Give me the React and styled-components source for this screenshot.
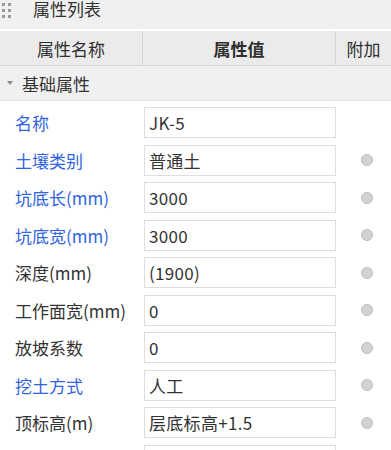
import React from 'react';
import styled, { createGlobalStyle } from 'styled-components';

const GlobalStyle = createGlobalStyle`
    html, body {
        margin: 0;
        padding: 0;
        background: #ffffff;
    }
    body {
        font-family: "Noto Sans CJK SC", "Noto Sans", sans-serif;
        color: #333333;
        overflow: hidden;
    }
`;

const rows = [
    { name: '名称', value: 'JK-5', link: true, extra: false },
    { name: '土壤类别', value: '普通土', link: true, extra: true },
    { name: '坑底长(mm)', value: '3000', link: true, extra: true },
    { name: '坑底宽(mm)', value: '3000', link: true, extra: true },
    { name: '深度(mm)', value: '(1900)', link: false, extra: true },
    { name: '工作面宽(mm)', value: '0', link: false, extra: true },
    { name: '放坡系数', value: '0', link: false, extra: true },
    { name: '挖土方式', value: '人工', link: true, extra: true },
    { name: '顶标高(m)', value: '层底标高+1.5', link: false, extra: true },
    { name: '', value: '', link: false, extra: false },
];

export default function App() {
    return (
        <Panel>
            <GlobalStyle />
            <TitleBar>
                <Grip>
                    {[0, 1, 2, 3, 4, 5].map((i) => <Dot key={i} />)}
                </Grip>
                <Title>属性列表</Title>
            </TitleBar>
            <HeaderRow>
                <HeadCell>属性名称</HeadCell>
                <HeadCell $bold>属性值</HeadCell>
                <HeadCell $last>附加</HeadCell>
            </HeaderRow>
            <GroupRow>
                <Caret />
                <GroupTitle>基础属性</GroupTitle>
            </GroupRow>
            <Rows>
                {rows.map((r, i) => (
                    <Row key={i}>
                        <Name $link={r.link}>{r.name}</Name>
                        <ValueBox>{r.value}</ValueBox>
                        <Extra>{r.extra && <Radio />}</Extra>
                    </Row>
                ))}
            </Rows>
        </Panel>
    );
}

const Panel = styled.div`
    display: flex;
    flex-direction: column;
    width: 391px;
    height: 450px;
    overflow: hidden;
    background: #ffffff;
    & > * {
        flex-shrink: 0;
    }
`;

const TitleBar = styled.div`
    display: flex;
    align-items: flex-start;
    height: 29px;
    background: #f0f0f0;
    border-bottom: 2px solid #ffffff;
`;

const Grip = styled.div`
    display: grid;
    grid-template-columns: 3px 3px;
    grid-auto-rows: 3px;
    column-gap: 3px;
    row-gap: 3px;
    padding: 3px 0 0 2px;
`;

const Dot = styled.span`
    width: 3px;
    height: 3px;
    background: #9a9a9a;
`;

const Title = styled.div`
    margin-left: 22px;
    font-size: 17px;
    line-height: 18px;
    color: #333333;
`;

const HeaderRow = styled.div`
    display: grid;
    grid-template-columns: 143px 193px 1fr;
    height: 34px;
    background: #ebebeb;
    border-bottom: 1px solid #d8d8d8;
`;

const HeadCell = styled.div`
    display: flex;
    align-items: center;
    justify-content: center;
    font-size: 17px;
    font-weight: ${(p) => (p.$bold ? 700 : 400)};
    color: #2e2e2e;
    border-right: ${(p) => (p.$last ? 'none' : '1px solid #d6d6d6')};
`;

const GroupRow = styled.div`
    display: flex;
    align-items: center;
    height: 34px;
    background: #f0f0f0;
    border-bottom: 1px solid #e4e4e4;
`;

const Caret = styled.span`
    width: 0;
    height: 0;
    margin: 0 9px 0 7px;
    border-left: 3.5px solid transparent;
    border-right: 3.5px solid transparent;
    border-top: 4px solid #8a8a8a;
`;

const GroupTitle = styled.div`
    font-size: 17px;
    color: #333333;
`;

const Rows = styled.div`
    display: flex;
    flex-direction: column;
    padding-top: 3px;
`;

const Row = styled.div`
    display: grid;
    grid-template-columns: 144px 192px 1fr;
    align-items: center;
    height: 37.5px;
    flex-shrink: 0;
`;

const Name = styled.div`
    padding-left: 15px;
    font-size: 17px;
    color: ${(p) => (p.$link ? '#3164e2' : '#333333')};
    white-space: nowrap;
`;

const ValueBox = styled.div`
    box-sizing: border-box;
    height: 31px;
    padding-left: 4px;
    display: flex;
    align-items: center;
    font-size: 17px;
    letter-spacing: 0.3px;
    color: #333333;
    border: 1px solid #dedede;
    background: #ffffff;
    white-space: nowrap;
`;

const Extra = styled.div`
    display: flex;
    justify-content: center;
    padding-left: 6px;
`;

const Radio = styled.span`
    box-sizing: border-box;
    width: 12px;
    height: 12px;
    border-radius: 50%;
    background: #d2d2d2;
    border: 1px solid #bdbdbd;
`;
